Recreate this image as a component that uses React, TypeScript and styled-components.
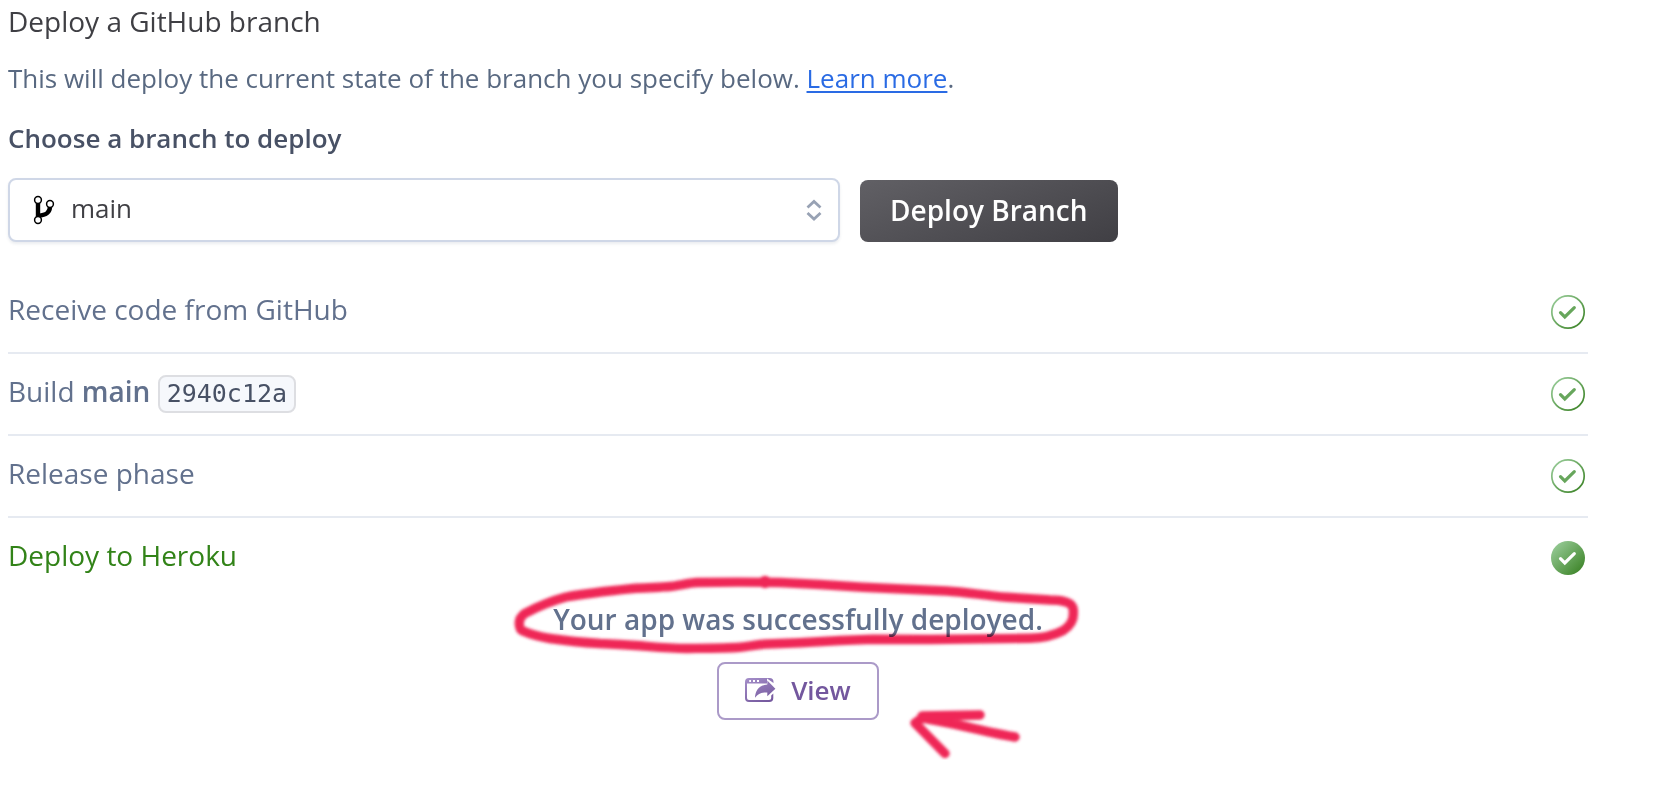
import React from "react";
import styled, { createGlobalStyle } from "styled-components";

const GlobalStyle = createGlobalStyle`
  *, *::before, *::after { box-sizing: border-box; }
  body {
    margin: 0;
    background: #fff;
    color: #3f3f44;
    font-family: "Open Sans", "Noto Sans", sans-serif;
    font-size: 28px;
  }
`;

const Page = styled.main`
  padding: 0 92px 40px 8px;
`;

const Title = styled.h1`
  margin: 0 0 18px;
  font-size: 28px;
  font-weight: 400;
  line-height: 42px;
`;

const Description = styled.p`
  margin: 0 0 24px;
  color: #596981;
  font-size: 26px;
  line-height: 36px;
`;

const Link = styled.a`
  color: #2a6be4;
  text-decoration: underline;
  text-decoration-thickness: 2px;
  text-underline-offset: 3px;
`;

const FieldLabel = styled.label`
  display: block;
  margin-bottom: 22px;
  color: #485165;
  font-size: 26px;
  font-weight: 600;
  line-height: 36px;
`;

const DeployForm = styled.form`
  display: grid;
  grid-template-columns: minmax(0, 832px) auto;
  justify-content: start;
  align-items: end;
  gap: 20px;
  margin-bottom: 30px;
`;

const SelectWrap = styled.div`
  position: relative;
`;

const Select = styled.select`
  display: block;
  width: 100%;
  height: 64px;
  padding: 0 60px 4px 61px;
  appearance: none;
  border: 2px solid #cfd7e7;
  border-radius: 8px;
  background: #fff;
  box-shadow: 0 2px 3px rgba(60, 80, 110, 0.1);
  color: #3f3f44;
  font: inherit;
  font-size: 26px;
`;

const BranchIconSlot = styled.svg`
  position: absolute;
  top: 17px;
  left: 24px;
  width: 24px;
  height: 30px;
  pointer-events: none;
`;

const ChevronsSlot = styled.svg`
  position: absolute;
  top: 20px;
  right: 16px;
  width: 20px;
  height: 24px;
  pointer-events: none;
`;

const PrimaryButton = styled.button`
  height: 62px;
  padding: 0 30px 3px;
  border: 0;
  border-radius: 8px;
  background: linear-gradient(160deg, #616065, #403f44);
  color: #fff;
  font: inherit;
  font-weight: 600;
  white-space: nowrap;
`;

const Steps = styled.ul`
  margin: 0;
  padding: 0;
  list-style: none;
`;

const Step = styled.li<{ $current?: boolean }>`
  display: flex;
  justify-content: space-between;
  align-items: flex-start;
  padding: 20px 0;
  color: ${(p) => (p.$current ? "#328318" : "#62718d")};
  line-height: 34px;

  &:not(:last-child) {
    border-bottom: 2px solid #e6eaf1;
  }
`;

const StatusIcon = styled.svg`
  flex: none;
  width: 40px;
  height: 40px;
`;

const BranchName = styled.strong`
  font-weight: 600;
`;

const Commit = styled.code`
  display: inline-block;
  padding: 0 7px;
  border: 2px solid #dddee2;
  border-radius: 8px;
  background: #f6f8fc;
  color: #485165;
  font-family: "DejaVu Sans Mono", monospace;
  font-size: 25px;
  line-height: 34px;
`;

const Result = styled.section`
  position: relative;
  display: flex;
  flex-direction: column;
  align-items: center;
  gap: 26px;
  padding-top: 4px;
`;

const Message = styled.p`
  margin: 0;
  color: #62718d;
  font-weight: 600;
  line-height: 34px;
`;

const OutlineButton = styled.button`
  display: flex;
  align-items: center;
  gap: 14px;
  height: 58px;
  padding: 0 26px 2px;
  border: 2px solid #ab9ac8;
  border-radius: 8px;
  background: #fff;
  color: #73579e;
  font: inherit;
  font-size: 26px;
  font-weight: 600;
`;

const Annotation = styled.svg`
  position: absolute;
  top: -28px;
  left: calc(50% - 298px);
  width: 600px;
  height: 210px;
  pointer-events: none;
  mix-blend-mode: multiply;
`;

function BranchIcon() {
  return (
    <BranchIconSlot viewBox="0 0 24 30" fill="none" stroke="#000" aria-hidden="true">
      <path d="M6 8v14" strokeWidth="4.4" />
      <path d="M18 12c-.4 5.500-3.500 8-11.500 8.600" strokeWidth="4.400" />
      <g fill="#fff" strokeWidth="1.500">
        <circle cx="6" cy="5" r="3.400" />
        <circle cx="18" cy="9" r="3.400" />
        <circle cx="6" cy="25" r="3.400" />
      </g>
    </BranchIconSlot>
  );
}

function Chevrons() {
  return (
    <ChevronsSlot viewBox="0 0 20 24" fill="none" stroke="#98a2b4" strokeWidth="2.800" aria-hidden="true">
      <path d="M3.500 9.500 10 3.500l6.500 6M3.500 15l6.500 6 6.500-6" />
    </ChevronsSlot>
  );
}

function Check({ id, filled }: { id: string; filled?: boolean }) {
  return (
    <StatusIcon viewBox="0 0 40 40" fill="none" role="img" aria-label="Complete">
      <defs>
        <linearGradient id={id} gradientUnits="userSpaceOnUse" x1="6" y1="6" x2="34" y2="34">
          <stop offset="0" stopColor="#97cb97" />
          <stop offset="1" stopColor="#3d8428" />
        </linearGradient>
      </defs>
      {filled ? (
        <circle cx="20" cy="20" r="17" fill={`url(#${id})`} />
      ) : (
        <circle cx="20" cy="20" r="16.200" stroke={`url(#${id})`} strokeWidth="1.700" />
      )}
      <path
        d="M12.500 20.700 16.800 25 26.300 15.700"
        stroke={filled ? "#fff" : "#67a65c"}
        strokeWidth="3.200"
        strokeLinecap="round"
      />
    </StatusIcon>
  );
}

function OpenAppIcon() {
  return (
    <svg width="32" height="26" viewBox="0 0 32 26" aria-hidden="true">
      <defs>
        <linearGradient id="open-app" gradientUnits="userSpaceOnUse" x1="6" y1="0" x2="18" y2="26">
          <stop offset="0" stopColor="#a38dc8" />
          <stop offset="1" stopColor="#765a9f" />
        </linearGradient>
      </defs>
      <g fill="url(#open-app)">
        <path
          fillRule="evenodd"
          d="M4 1H24.500Q28.500 1 28.500 5V6L22 1.500V6.500H2V21Q2 23 4 23H24Q26.200 23 26.200 21V18.500L28.300 16.500V21Q28.300 25 24.300 25H4Q0 25 0 21V5Q0 1 4 1ZM4.200 3V5H6V3ZM8 3V5H10V3ZM12 3V5H14V3Z"
        />
        <path d="M22.300 3.500 30.400 11.800 22.300 19.300V15.500C16.500 15.300 13.500 16.800 10 20.800C10.300 13 14.500 8 22.300 7.500Z" />
      </g>
    </svg>
  );
}

function HandDrawnMarks() {
  return (
    <Annotation viewBox="500 570 600 210" fill="none" aria-hidden="true">
      <defs>
        <filter id="brush" filterUnits="userSpaceOnUse" x="500" y="570" width="600" height="210">
          <feGaussianBlur stdDeviation="1.400" />
        </filter>
      </defs>
      <g filter="url(#brush)" stroke="#ef2556" strokeWidth="9.400" strokeLinecap="round" strokeLinejoin="round">
        <path d="M780 582.500C750 582 725 582 697 582.500C687 583 678 586 667 586.700C655 588 645 587.500 633 588.500C608 591 585 593.500 566 597C551 601 537 607 525 613.300C520 617 519 621 519.300 624C519.500 628 520 630 523 631C532 635 541 637 550 638.500C567 641 583 642.500 600 643.500C615 644 630 645 640 645.800C655 647 670 648.500 687 648.500C705 648.300 725 648.300 740 647.300C750 646.500 757 644.500 767 644L800 642.700L840 640.500L873 639.300L930 639.500L1030 638.300C1043 638 1055 635 1063 630.700C1070 626 1074 621 1073.300 613C1074 606 1071 603 1064 601.500C1060 600 1055 600 1050 600L1007 597.300C985 595.500 965 592 947 591L863 587.300L820 584.500Z" />
        <path d="M980 715 922 716M1015 737C985 732 955 723 922 718L915 723 945 753.500" />
        <circle cx="765" cy="582" r="1.500" />
      </g>
    </Annotation>
  );
}

export default function App() {
  return (
    <>
      <GlobalStyle />
      <Page>
        <Title>Deploy a GitHub branch</Title>
        <Description>
          This will deploy the current state of the branch you specify below. <Link href="#learn-more">Learn more</Link>.
        </Description>
        <FieldLabel htmlFor="branch">Choose a branch to deploy</FieldLabel>
        <DeployForm onSubmit={(e) => e.preventDefault()}>
          <SelectWrap>
            <Select id="branch" defaultValue="main">
              <option value="main">main</option>
            </Select>
            <BranchIcon />
            <Chevrons />
          </SelectWrap>
          <PrimaryButton type="submit">Deploy Branch</PrimaryButton>
        </DeployForm>
        <Steps>
          <Step>
            <span>Receive code from GitHub</span>
            <Check id="check-receive" />
          </Step>
          <Step>
            <span>
              Build <BranchName>main</BranchName> <Commit>2940c12a</Commit>
            </span>
            <Check id="check-build" />
          </Step>
          <Step>
            <span>Release phase</span>
            <Check id="check-release" />
          </Step>
          <Step $current>
            <span>Deploy to Heroku</span>
            <Check id="check-deploy" filled />
          </Step>
        </Steps>
        <Result>
          <Message>Your app was successfully deployed.</Message>
          <OutlineButton type="button">
            <OpenAppIcon />
            View
          </OutlineButton>
          <HandDrawnMarks />
        </Result>
      </Page>
    </>
  );
}
